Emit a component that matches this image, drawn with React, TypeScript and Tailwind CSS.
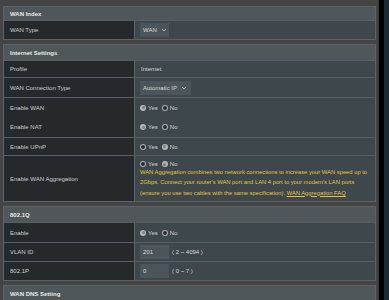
import { ReactNode } from 'react';

function Chevron() {
    return (
        <svg width="6" height="4" viewBox="0 0 6 4" className="ml-[4px]">
            <polyline points="1,1 3,3 5,1" fill="none" stroke="#cfd4d6" strokeWidth="0.8" />
        </svg>
    );
}

function Radio({ checked }: { checked: boolean }) {
    return checked ? (
        <span className="inline-flex h-[6px] w-[6px] items-center justify-center rounded-full bg-[#b5b8ba]">
            <span className="h-[3px] w-[3px] rounded-full bg-[#7d8184]" />
        </span>
    ) : (
        <span className="inline-flex h-[6px] w-[6px] items-center justify-center rounded-full bg-[#aeb1b3]">
            <span className="h-[4px] w-[4px] rounded-full bg-[#2a2b36]" />
        </span>
    );
}

function YesNo({ yes }: { yes: boolean }) {
    return (
        <div className="flex items-center text-[#d4d7d8]">
            <Radio checked={yes} />
            <span className="ml-[2px]">Yes</span>
            <span className="ml-[4px]">
                <Radio checked={!yes} />
            </span>
            <span className="ml-[2px]">No</span>
        </div>
    );
}

function Header({ title, h }: { title: string; h: string }) {
    return (
        <div className={`flex items-center bg-[#50575a] pl-[6px] font-bold text-[#e8eaea] ${h}`}>{title}</div>
    );
}

function Row({ label, children, h, line = true }: { label: string; children?: ReactNode; h: string; line?: boolean }) {
    return (
        <div className={`grid grid-cols-[131px_1fr] ${line ? 'border-t border-[#566064]' : ''} ${h}`}>
            <div className="flex items-center border-r border-[#5a6366] bg-[#25292c] pl-[6px] text-[#cdd0d1]">{label}</div>
            <div className="flex items-center bg-[#3d474c] pl-[5px] text-[#d8dbdc]">{children}</div>
        </div>
    );
}

function Box({ children, w }: { children: ReactNode; w: string }) {
    return <div className={`flex h-[14px] items-center bg-[#4b555a] pl-[3px] ${w}`}>{children}</div>;
}

export default function App() {
    return (
        <div className="flex h-[300px] w-[389px] overflow-hidden bg-[#444444] font-['Liberation_Sans',Arial,sans-serif] text-[6px] leading-none">
            <div className="flex flex-1 flex-col gap-[4px] pr-[2px] pl-[3px] pt-[6px]">
                <section className="border border-[#5d6264]">
                    <Header title="WAN Index" h="h-[13px]" />
                    <Row label="WAN Type" h="h-[19px]">
                        <Box w="w-[29px]">
                            WAN
                            <Chevron />
                        </Box>
                    </Row>
                </section>

                <section className="border border-[#5d6264]">
                    <Header title="Internet Settings" h="h-[15px]" />
                    <Row label="Profile" h="h-[17px]">
                        <span className="ml-[1px]">Internet</span>
                    </Row>
                    <Row label="WAN Connection Type" h="h-[20px]">
                        <Box w="w-[51px]">
                            Automatic IP
                            <Chevron />
                        </Box>
                    </Row>
                    <Row label="Enable WAN" h="h-[20px]">
                        <YesNo yes />
                    </Row>
                    <Row label="Enable NAT" h="h-[20px]" line={false}>
                        <YesNo yes />
                    </Row>
                    <Row label="Enable UPnP" h="h-[18px]">
                        <YesNo yes={false} />
                    </Row>
                    <div className="grid h-[46px] grid-cols-[131px_1fr] border-t border-[#566064]">
                        <div className="flex items-center border-r border-[#5a6366] bg-[#25292c] pl-[6px] text-[#cdd0d1]">
                            Enable WAN Aggregation
                        </div>
                        <div className="flex flex-col justify-center bg-[#3d474c] pl-[5px] text-[#d8dbdc]">
                            <YesNo yes={false} />
                            <div className="mt-[3px] flex flex-col gap-[4.5px] whitespace-nowrap text-[5.8px] text-[#e6c43a]">
                                <span>WAN Aggregation combines two network connections to increase your WAN speed up to</span>
                                <span>2Gbps. Connect your router's WAN port and LAN 4 port to your modem's LAN ports</span>
                                <span>
                                    (ensure you use two cables with the same specification).{' '}
                                    <span className="underline">WAN Aggregation FAQ</span>
                                </span>
                            </div>
                        </div>
                    </div>
                </section>

                <section className="border border-[#5d6264]">
                    <Header title="802.1Q" h="h-[15px]" />
                    <Row label="Enable" h="h-[20px]">
                        <YesNo yes />
                    </Row>
                    <Row label="VLAN ID" h="h-[19px]">
                        <Box w="w-[29px]">201</Box>
                        <span className="ml-[3px]">( 2 ~ 4094 )</span>
                    </Row>
                    <Row label="802.1P" h="h-[19px]">
                        <Box w="w-[29px]">0</Box>
                        <span className="ml-[3px]">( 0 ~ 7 )</span>
                    </Row>
                </section>

                <section className="border border-[#5d6264]">
                    <Header title="WAN DNS Setting" h="h-[16px]" />
                </section>
            </div>
            <div className="w-[1px] bg-[#333333]" />
            <div className="w-[5px] bg-black" />
            <div className="w-[5px] bg-[#1d2a33]" />
        </div>
    );
}
